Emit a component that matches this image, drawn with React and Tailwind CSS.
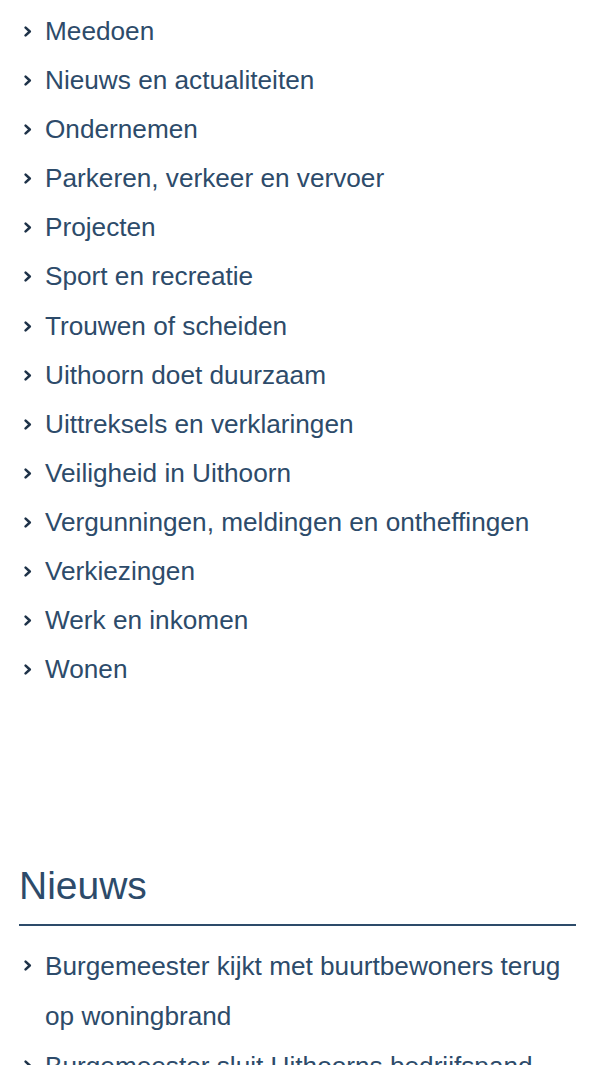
import React from "react";

const items = [
  "Meedoen",
  "Nieuws en actualiteiten",
  "Ondernemen",
  "Parkeren, verkeer en vervoer",
  "Projecten",
  "Sport en recreatie",
  "Trouwen of scheiden",
  "Uithoorn doet duurzaam",
  "Uittreksels en verklaringen",
  "Veiligheid in Uithoorn",
  "Vergunningen, meldingen en ontheffingen",
  "Verkiezingen",
  "Werk en inkomen",
  "Wonen",
];

const news = [
  "Burgemeester kijkt met buurtbewoners terug op woningbrand",
  "Burgemeester sluit Uithoorns bedrijfspand",
];

function Chevron() {
  return (
    <svg
      width="8"
      height="11"
      viewBox="0 0 8 11"
      className="absolute left-[-21px] top-[19px]"
      aria-hidden="true"
    >
      <path d="M1.6 1.6 L5.8 5.5 L1.6 9.4" fill="none" stroke="#1f3349" strokeWidth="2.5" strokeLinecap="round" strokeLinejoin="round" />
    </svg>
  );
}

function Item({ text }) {
  return (
    <li className="relative">
      <Chevron />
      <a href="#" className="text-[#2d4b6a] no-underline">{text}</a>
    </li>
  );
}

export default function App() {
  return (
    <div
      className="min-h-[1065px] w-[600px] bg-white overflow-hidden"
      style={{ fontFamily: '"Liberation Sans", Arial, Helvetica, sans-serif' }}
    >
      <ul className="pt-[7px] pl-[45px] pr-[24px] text-[26.2px] leading-[49.1px]">
        {items.map((t) => (
          <Item key={t} text={t} />
        ))}
      </ul>
      <section className="mt-[168px] ml-[19px] mr-[24px]">
        <h2 className="text-[39px] leading-[47px] text-[#2d4b6a] font-normal pb-[15px] border-b-2 border-[#2d4b6a]">
          Nieuws
        </h2>
        <ul className="mt-[15px] pl-[26px] text-[26.2px] leading-[50px]">
          {news.map((t) => (
            <Item key={t} text={t} />
          ))}
        </ul>
      </section>
    </div>
  );
}
